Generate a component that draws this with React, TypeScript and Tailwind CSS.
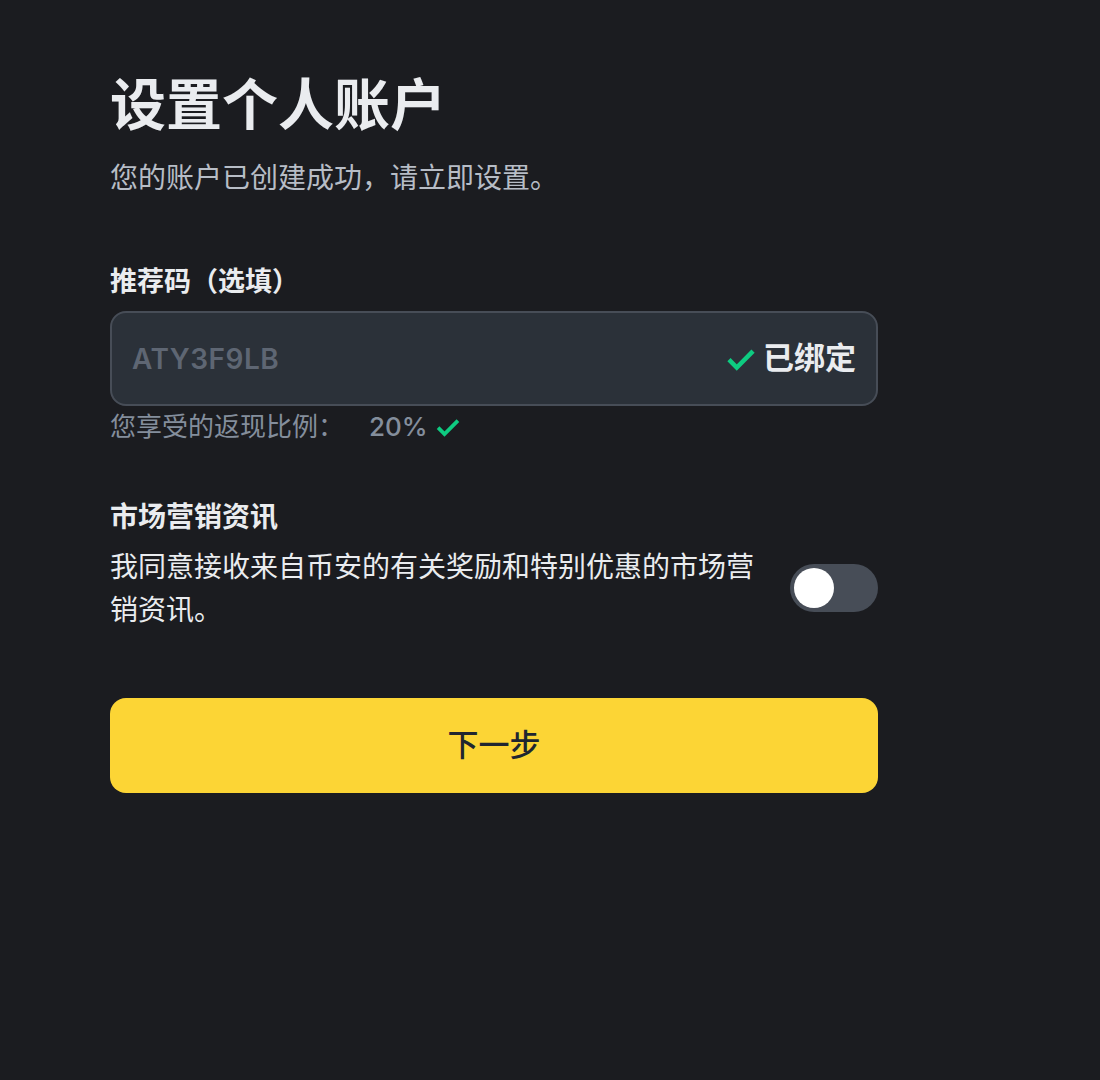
import React from "react";

const Check = ({ size = 30 }: { size?: number }) => (
  <svg width={size} height={size} viewBox="0 0 24 24" fill="none">
    <path d="M3.5 12.5l5.5 5.5L20.5 6.5" stroke="#0ecb81" strokeWidth="3.2" strokeLinecap="butt" strokeLinejoin="miter" />
  </svg>
);

export default function App() {
  return (
    <div
      className="min-h-[1080px] w-full bg-[#1b1c20] text-[#eaecef]"
      style={{ fontFamily: 'Inter, "Noto Sans CJK SC", "Noto Sans", sans-serif' }}
    >
      <div className="ml-[110px] w-[768px] pt-[73px]">
        <h1 className="text-[56px] font-bold leading-[64px] text-[#eaecef]">设置个人账户</h1>
        <p className="mt-[21px] text-[28px] leading-[40px] text-[#b7bdc6]">您的账户已创建成功，请立即设置。</p>

        <div className="mt-[66px] text-[27px] font-bold leading-[36px] text-[#eaecef]">推荐码（选填）</div>
        <div className="mt-[11px] flex h-[95px] items-center justify-between rounded-[16px] border-2 border-[#474d57] bg-[#2b3139] pl-[20px] pr-[20px]">
          <span className="text-[28px] font-semibold tracking-[0.5px] text-[#5e6673]">ATY3F9LB</span>
          <div className="flex items-center gap-[5px]">
            <Check size={34} />
            <span className="text-[31px] font-bold text-[#eaecef]">已绑定</span>
          </div>
        </div>
        <div className="mt-[3px] flex items-center text-[26px] leading-[36px] text-[#848e9c]">
          <span>您享受的返现比例：</span>
          <span className="ml-[25px] font-medium">20%</span>
          <span className="ml-[6px] flex items-center">
            <Check size={28} />
          </span>
        </div>

        <div className="mt-[54px] text-[28px] font-bold leading-[36px] text-[#eaecef]">市场营销资讯</div>
        <div className="mt-[11px] flex items-center justify-between">
          <p className="w-[652px] text-[28px] leading-[43px] text-[#eaecef]">
            我同意接收来自币安的有关奖励和特别优惠的市场营销资讯。
          </p>
          <div className="-mt-[3px] flex h-[48px] w-[88px] items-center rounded-full bg-[#474d57] px-[4px]">
            <div className="h-[40px] w-[40px] rounded-full bg-white" />
          </div>
        </div>

        <button className="mt-[66px] flex h-[95px] w-full items-center justify-center rounded-[16px] bg-[#fcd535] text-[31px] font-medium text-[#202630]">
          下一步
        </button>
      </div>
    </div>
  );
}
